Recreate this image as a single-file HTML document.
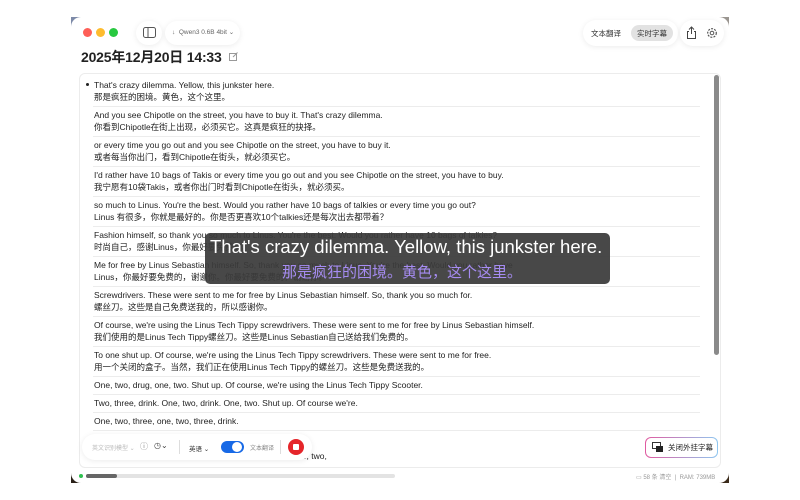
<!DOCTYPE html>
<html><head><meta charset="utf-8"><style>
*{margin:0;padding:0;box-sizing:border-box}
body{width:800px;height:500px;background:#fff;position:relative;overflow:hidden;font-family:"Liberation Sans","Noto Sans CJK SC",sans-serif;color:#222}
.win{position:absolute;left:71px;top:17px;width:658px;height:466px;background:#fff;border-radius:10px;overflow:hidden}
.cornerTL{position:absolute;left:71px;top:17px;width:10px;height:10px;background:#7d8aa8}
.cornerBL{position:absolute;left:71px;top:473px;width:10px;height:10px;background:#2a2118}
.cornerBR{position:absolute;left:719px;top:473px;width:10px;height:10px;background:#3a2a1a}
.cornerTR{position:absolute;left:719px;top:17px;width:10px;height:10px;background:#9a9590}
.abs{position:absolute}
.dot{position:absolute;top:28px;width:9px;height:9px;border-radius:50%}
.box{position:absolute;left:79px;top:73px;width:642px;height:395px;border:1px solid #ececec;border-radius:6px;background:#fff}
.row{position:absolute;left:94px;font-size:8.5px;line-height:12px;color:#222;white-space:nowrap}
.sep{position:absolute;left:93px;width:607px;height:1px;background:#ececec}
.pill{position:absolute;background:#fff;border-radius:14px;box-shadow:0 1px 6px rgba(0,0,0,.08)}
</style></head><body>
<div class="cornerTL"></div><div class="cornerTR"></div><div class="cornerBL"></div><div class="cornerBR"></div>
<div class="win"></div>
<div class="dot" style="left:83px;background:#fe5f57"></div>
<div class="dot" style="left:96px;background:#febc2e"></div>
<div class="dot" style="left:109px;background:#28c840"></div>
<div class="pill" style="left:136px;top:21px;width:26px;height:24px"></div>
<svg class="abs" style="left:143px;top:27px" width="13" height="11"><rect x="0.5" y="0.5" width="12" height="10" rx="2" fill="none" stroke="#555"/><line x1="5" y1="1" x2="5" y2="10" stroke="#555"/></svg>
<div class="pill" style="left:165px;top:21px;width:75px;height:24px"></div>
<div class="abs" style="left:172px;top:28px;font-size:6.5px;color:#666">↓ &nbsp;Qwen3 0.6B 4bit ⌄</div>
<div class="abs" style="left:81px;top:47px;font-size:14px;font-weight:bold;color:#222;letter-spacing:-0.2px">2025年12月20日 14:33</div>
<svg class="abs" style="left:229px;top:52px" width="9" height="9"><rect x="0.5" y="1.5" width="7" height="7" fill="none" stroke="#999"/><line x1="4" y1="5" x2="8.5" y2="0.5" stroke="#999"/></svg>
<div class="pill" style="left:583px;top:20px;width:95px;height:26px"></div>
<div class="abs" style="left:591px;top:28px;font-size:7.5px;color:#333">文本翻译</div>
<div class="abs" style="left:631px;top:25px;width:42px;height:16px;border-radius:8px;background:#e2e2e2"></div>
<div class="abs" style="left:637px;top:28px;font-size:7.5px;color:#333">实时字幕</div>
<div class="pill" style="left:680px;top:20px;width:44px;height:26px"></div>
<svg class="abs" style="left:686px;top:26px" width="11" height="13"><path d="M5.5 1v7M3 3.5l2.5-2.5 2.5 2.5M3 5.5H1.5v7h8v-7H8" fill="none" stroke="#444" stroke-width="1"/></svg>
<svg class="abs" style="left:706px;top:27px" width="12" height="12"><circle cx="6" cy="6" r="4.3" fill="none" stroke="#555" stroke-width="1.2" stroke-dasharray="2 1.2"/><circle cx="6" cy="6" r="1.8" fill="none" stroke="#555"/></svg>

<div class="box"></div>
<div class="abs" style="left:714px;top:75px;width:5px;height:280px;border-radius:3px;background:#8a8a8a"></div>
<div class="abs" style="left:86px;top:83px;width:3px;height:3px;border-radius:50%;background:#222"></div>

<div class="row" style="top:79px">That's crazy dilemma. Yellow, this junkster here.<br>那是疯狂的困境。黄色，这个这里。</div>
<div class="sep" style="top:106px"></div>
<div class="row" style="top:109px">And you see Chipotle on the street, you have to buy it. That's crazy dilemma.<br>你看到Chipotle在街上出现，必须买它。这真是疯狂的抉择。</div>
<div class="sep" style="top:136px"></div>
<div class="row" style="top:139px">or every time you go out and you see Chipotle on the street, you have to buy it.<br>或者每当你出门，看到Chipotle在街头，就必须买它。</div>
<div class="sep" style="top:166px"></div>
<div class="row" style="top:169px">I'd rather have 10 bags of Takis or every time you go out and you see Chipotle on the street, you have to buy.<br>我宁愿有10袋Takis，或者你出门时看到Chipotle在街头，就必须买。</div>
<div class="sep" style="top:196px"></div>
<div class="row" style="top:199px">so much to Linus. You're the best. Would you rather have 10 bags of talkies or every time you go out?<br>Linus 有很多，你就是最好的。你是否更喜欢10个talkies还是每次出去都带着？</div>
<div class="sep" style="top:226px"></div>
<div class="row" style="top:229px">Fashion himself, so thank you so much to Linus. You're the best. Would you rather have 10 bags of talkies?<br>时尚自己，感谢Linus，你最好要免费的。</div>
<div class="sep" style="top:256px"></div>
<div class="row" style="top:259px">Me for free by Linus Sebastian himself. So, thank you so much to Linus. You're the best. Would you rather have<br>Linus，你最好要免费的，谢谢你。你最好要免费的，谢谢你。</div>
<div class="sep" style="top:286px"></div>
<div class="row" style="top:289px">Screwdrivers. These were sent to me for free by Linus Sebastian himself. So, thank you so much for.<br>螺丝刀。这些是自己免费送我的，所以感谢你。</div>
<div class="sep" style="top:316px"></div>
<div class="row" style="top:319px">Of course, we're using the Linus Tech Tippy screwdrivers. These were sent to me for free by Linus Sebastian himself.<br>我们使用的是Linus Tech Tippy螺丝刀。这些是Linus Sebastian自己送给我们免费的。</div>
<div class="sep" style="top:346px"></div>
<div class="row" style="top:349px">To one shut up. Of course, we're using the Linus Tech Tippy screwdrivers. These were sent to me for free.<br>用一个关闭的盒子。当然，我们正在使用Linus Tech Tippy的螺丝刀。这些是免费送我的。</div>
<div class="sep" style="top:376px"></div>
<div class="row" style="top:379px">One, two, drug, one, two. Shut up. Of course, we're using the Linus Tech Tippy Scooter.</div>
<div class="sep" style="top:394px"></div>
<div class="row" style="top:397px">Two, three, drink. One, two, drink. One, two. Shut up. Of course we're.</div>
<div class="sep" style="top:412px"></div>
<div class="row" style="top:415px">One, two, three, one, two, three, drink.</div>
<div class="sep" style="top:430px"></div>
<div class="row" style="top:450px;left:290px">...ne, two,</div>

<div class="abs" style="left:205px;top:233px;width:405px;height:51px;border-radius:5px;background:rgba(58,58,58,.93)"></div>
<div class="abs" style="left:210px;top:236px;font-size:18.5px;color:#fff;white-space:nowrap">That's crazy dilemma. Yellow, this junkster here.</div>
<div class="abs" style="left:282px;top:261px;font-size:15px;color:#a68cf2;white-space:nowrap">那是疯狂的困境。黄色，这个这里。</div>

<div class="pill" style="left:82px;top:434px;width:230px;height:26px"></div>
<div class="abs" style="left:92px;top:443px;font-size:6px;color:#bbb">英文识别模型 ⌄</div>
<div class="abs" style="left:140px;top:441px;font-size:8px;color:#888">ⓘ</div>
<div class="abs" style="left:154px;top:441px;font-size:8px;color:#444">◷⌄</div>
<div class="abs" style="left:179px;top:440px;width:1px;height:14px;background:#ddd"></div>
<div class="abs" style="left:189px;top:443px;font-size:6.5px;color:#333">英语 ⌄</div>
<div class="abs" style="left:221px;top:441px;width:23px;height:12px;border-radius:6px;background:#1769e6"></div>
<div class="abs" style="left:232px;top:442px;width:10px;height:10px;border-radius:50%;background:#fff"></div>
<div class="abs" style="left:250px;top:443px;font-size:6px;color:#888">文本翻译</div>
<div class="abs" style="left:280px;top:440px;width:1px;height:14px;background:#ddd"></div>
<div class="abs" style="left:288px;top:439px;width:16px;height:16px;border-radius:50%;background:#e5252a"></div>
<div class="abs" style="left:293px;top:444px;width:6px;height:6px;border-radius:1px;background:#fff"></div>

<div class="abs" style="left:645px;top:437px;width:73px;height:21px;border-radius:6px;background:linear-gradient(90deg,#e05aa0,#8fc7f0);padding:1px"><div style="width:100%;height:100%;background:#fff;border-radius:5px"></div></div>
<svg class="abs" style="left:652px;top:442px" width="11" height="10"><rect x="0.5" y="0.5" width="8" height="6" fill="none" stroke="#333"/><rect x="4" y="4" width="7" height="6" fill="#222"/></svg>
<div class="abs" style="left:668px;top:442px;font-size:7.5px;color:#222">关闭外挂字幕</div>

<div class="abs" style="left:79px;top:474px;width:4px;height:4px;border-radius:50%;background:#2fc050"></div>
<div class="abs" style="left:86px;top:474px;width:309px;height:4px;border-radius:2px;background:#e3e3e3"></div>
<div class="abs" style="left:86px;top:474px;width:31px;height:4px;border-radius:2px;background:#666"></div>
<div class="abs" style="left:636px;top:472px;font-size:6px;color:#999;white-space:nowrap">▭ 58 条 清空 &nbsp;|&nbsp; RAM: 739MB</div>
</body></html>
